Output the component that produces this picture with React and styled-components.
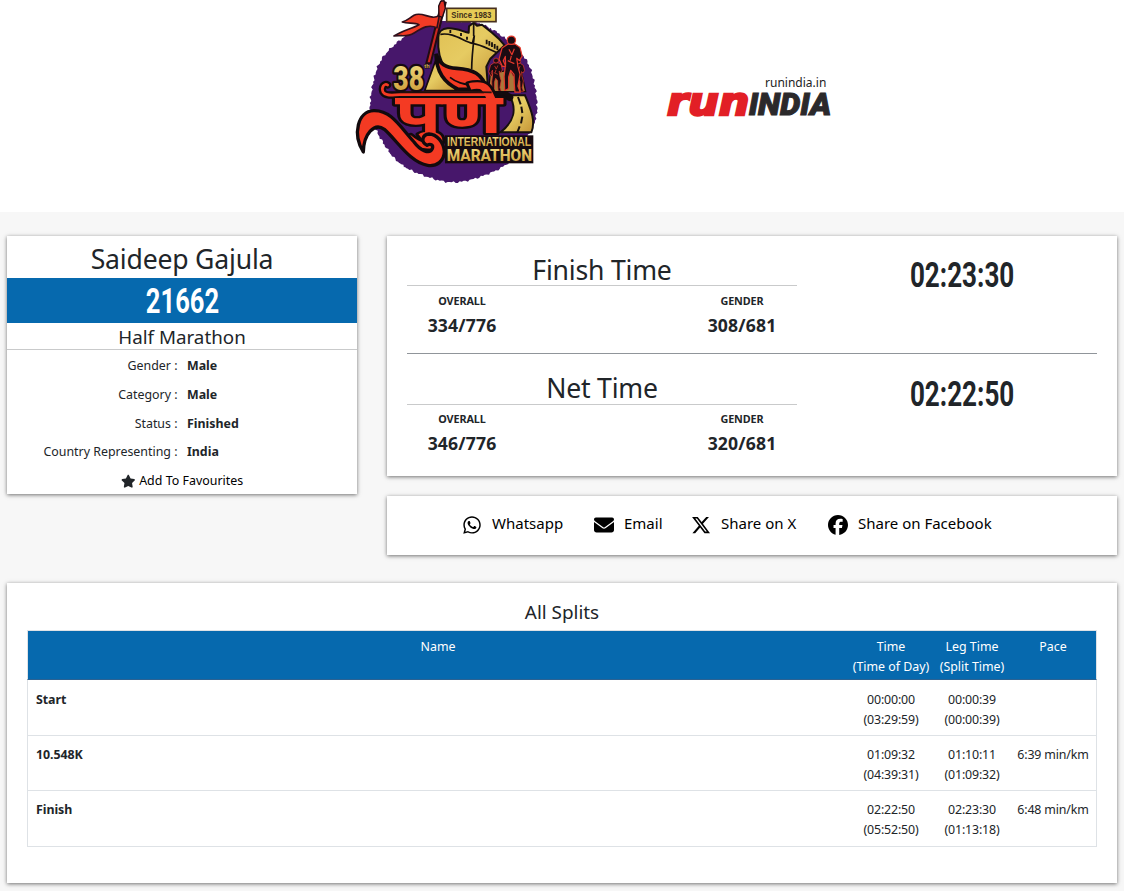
import React from "react";
import styled, { createGlobalStyle } from "styled-components";
import { FaStar, FaWhatsapp, FaEnvelope, FaXTwitter, FaFacebook } from "react-icons/fa6";

const GlobalStyle = createGlobalStyle`
  *, *::before, *::after { box-sizing: border-box; }
  body {
    margin: 0;
    background: #f7f7f7;
    color: #212529;
    font-family: "Noto Sans", "Open Sans", sans-serif;
    font-size: 12.4px;
    line-height: 19.5px;
  }
`;

const Page = styled.div`
  width: 1124px;
  height: 891px;
  overflow: hidden;
`;

const Header = styled.header`
  display: flex;
  height: 212px;
  padding-left: 345px;
  background: #fff;
`;

const EventLogo = styled.svg`
  width: 205px;
  height: 190px;
`;

const BrandLogo = styled.svg`
  width: 190px;
  height: 65px;
  margin: 65px 0 0 105px;
`;

const Main = styled.main`
  display: grid;
  grid-template-columns: 350px 730px;
  column-gap: 30px;
  padding: 24px 7px 0;
  align-items: start;
`;

const Card = styled.section`
  background: #fff;
  box-shadow: 0 1px 4px rgba(0, 0, 0, 0.55);
`;

const ProfileCard = styled(Card)`
  height: 258px;
  text-align: center;
`;

const RunnerName = styled.h1`
  margin: 0;
  height: 42px;
  font-size: 26.6px;
  font-weight: 400;
  line-height: 46px;
  letter-spacing: -0.2px;
`;

const Bib = styled.div`
  height: 45px;
  padding-top: 2px;
  background: #0669ae;
  color: #fff;
  display: flex;
  justify-content: center;
  align-items: center;
`;

const Condensed = styled.span`
  display: inline-block;
  font-family: Roboto, sans-serif;
  font-size: 34.5px;
  font-weight: 700;
  line-height: 45px;
  white-space: nowrap;
  transform: scaleX(${(p) => p.$scale});
`;

const Race = styled.div`
  height: 27px;
  border-bottom: 1px solid #c9cacb;
  font-size: 18.8px;
  line-height: 28px;
`;

const Facts = styled.dl`
  margin: 0;
  padding-top: 2px;
`;

const Fact = styled.div`
  display: grid;
  grid-template-columns: 170.5px 1fr;
  column-gap: 9.5px;
  height: 28.75px;
  line-height: 28.75px;
`;

const FactLabel = styled.dt`
  text-align: right;
`;

const FactValue = styled.dd`
  margin: 0;
  text-align: left;
  font-weight: 700;
`;

const Favourite = styled.div`
  display: flex;
  align-items: center;
  justify-content: center;
  gap: 4px;
  height: 28px;
  color: #000;
  letter-spacing: 0.03px;
  svg { color: #212529; font-size: 14.5px; }
`;

const SideColumn = styled.div`
  display: grid;
  row-gap: 20px;
`;

const TimesCard = styled(Card)`
  height: 240px;
  padding: 0 20px;
`;

const TimeBlock = styled.div`
  display: grid;
  grid-template-columns: 390px 1fr;
  column-gap: 30px;
  height: ${(p) => (p.$ruled ? "118px" : "122px")};
  border-bottom: ${(p) => (p.$ruled ? "1px solid #90959a" : "0")};
`;

const TimeTitle = styled.h2`
  margin: 0;
  height: ${(p) => (p.$ruled ? "50px" : "51px")};
  padding-top: 12px;
  border-bottom: 1px solid #c9cacb;
  text-align: center;
  font-size: 26.6px;
  font-weight: 400;
  line-height: 44px;
  letter-spacing: -0.2px;
`;

const Ranks = styled.div`
  display: flex;
  justify-content: space-between;
  padding-top: ${(p) => (p.$ruled ? "6px" : "5px")};
`;

const Rank = styled.div`
  width: 110px;
  text-align: center;
`;

const RankLabel = styled.div`
  font-size: 10.8px;
  font-weight: 700;
  line-height: 18px;
  letter-spacing: -0.1px;
`;

const RankValue = styled.div`
  font-size: 17.6px;
  font-weight: 700;
  line-height: 30px;
  letter-spacing: 0.15px;
`;

const Clock = styled.div`
  display: flex;
  justify-content: center;
  padding-top: ${(p) => (p.$ruled ? "17px" : "18px")};
`;

const ShareCard = styled(Card)`
  display: flex;
  height: 59px;
  padding: 0 0 3px 75px;
  align-items: center;
  color: #000;
  font-size: 15px;
`;

const ShareLink = styled.a`
  display: flex;
  align-items: center;
  width: ${(p) => p.$width}px;
  white-space: nowrap;
  svg { font-size: 20px; margin: 2px 10px 0 0; flex: none; }
`;

const SplitsCard = styled(Card)`
  grid-column: 1 / -1;
  height: 300px;
  margin-top: 28px;
  padding: 16px 20px 0;
`;

const SplitsTitle = styled.h3`
  margin: 0;
  height: 31px;
  text-align: center;
  font-size: 18.9px;
  font-weight: 400;
  line-height: 26px;
`;

const SplitRow = styled.div`
  display: grid;
  grid-template-columns: 820px 86px 76px 86px;
  width: 1070px;
  height: ${(p) => p.$height}px;
  padding-top: ${(p) => p.$pad}px;
  border: 1px solid #dee2e6;
  border-top: 0;
`;

const SplitHead = styled(SplitRow)`
  background: #0669ae;
  background-clip: padding-box;
  border-top: 1px solid #dee2e6;
  border-bottom-color: #2c6292;
  color: #fff;
  line-height: 20px;
`;

const Cell = styled.div`
  text-align: center;
  white-space: pre-line;
  letter-spacing: ${(p) => (p.$head ? 0 : -0.15)}px;
`;

const NameCell = styled.div`
  padding-left: 8px;
  font-weight: 700;
  letter-spacing: -0.05px;
`;

const facts = [
  ["Gender :", "Male"],
  ["Category :", "Male"],
  ["Status :", "Finished"],
  ["Country Representing :", "India"],
];

const times = [
  { title: "Finish Time", overall: "334/776", gender: "308/681", clock: "02:23:30" },
  { title: "Net Time", overall: "346/776", gender: "320/681", clock: "02:22:50" },
];

const splits = [
  { name: "Start", time: "00:00:00\n(03:29:59)", leg: "00:00:39\n(00:00:39)", pace: "", height: 56, pad: 10 },
  { name: "10.548K", time: "01:09:32\n(04:39:31)", leg: "01:10:11\n(01:09:32)", pace: "6:39 min/km", height: 55, pad: 9 },
  { name: "Finish", time: "02:22:50\n(05:52:50)", leg: "02:23:30\n(01:13:18)", pace: "6:48 min/km", height: 56, pad: 9 },
];

// Brush-edged disc: the radius wobbles on several frequencies around the circle.
const disc = Array.from({ length: 260 }, (_, i) => {
  const a = (i / 260) * Math.PI * 2;
  const r = 1 + 0.008 * Math.sin(a * 9) + 0.009 * Math.sin(i * 2.3) + 0.007 * Math.sin(i * 5.1 + 1);
  return `${(326 + 250 * r * Math.cos(a)).toFixed(1)},${(303 + 242 * r * Math.sin(a)).toFixed(1)}`;
}).join(" ");

const flecks = [[96, 424, 7], [112, 447, 5], [127, 455, 8], [144, 477, 6], [158, 487, 9], [177, 500, 6], [196, 513, 8], [221, 524, 6], [243, 533, 5], [430, 79, 6], [449, 84, 8], [470, 94, 6], [492, 103, 7], [531, 139, 7], [548, 158, 6], [563, 184, 8]];

function Runner({ x, y, s }) {
  return (
    <g transform={`translate(${x} ${y}) scale(${s})`} stroke="#e5382b" strokeWidth="4" fill="#1c0b12" strokeLinejoin="round">
      <path d="M-12 5 L12 4 L29 16 L36 45 L27 60 L18 52 L22 80 L29 106 L22 145 L30 165 L12 165 L10 137 L9 106 L-2 92 L-9 115 L-9 153 L-22 160 L-24 112 L-19 70 L-20 46 L-27 60 L-19 78 L-30 79 L-41 55 L-31 18 Z" />
      <circle cx="0" cy="-8" r="14" />
      <path d="M-8 22 L2 40 L10 20 M-12 60 L10 70 M0 44 L-4 60" fill="none" />
    </g>
  );
}

function MarathonLogo() {
  return (
    <EventLogo viewBox="0 0 615 570" role="img" aria-label="Pune International Marathon">
      <defs>
        <linearGradient id="gold" x1="0" y1="0" x2="1" y2="1">
          <stop offset="0" stopColor="#e0c053" />
          <stop offset="0.45" stopColor="#e6cb62" />
          <stop offset="1" stopColor="#c49436" />
        </linearGradient>
        <linearGradient id="goldText" x1="0" y1="0" x2="0" y2="1">
          <stop offset="0" stopColor="#f5e488" />
          <stop offset="1" stopColor="#c8932f" />
        </linearGradient>
      </defs>
      <polygon points={disc} fill="#47176b" />
      {flecks.map(([x, y, w]) => (
        <path key={x} d={`M${x} ${y} l${w} ${w / 2} l-2 4 l-${w / 2} -1 Z`} fill="#fff" />
      ))}
      <path d="M291 4 L302 8 L257 190 L244 190 Z" fill="#c9281f" stroke="#210b13" strokeWidth="6" />
      <path d="M283 46 C258 64 232 32 207 46 C193 54 187 62 172 66 C188 72 208 67 222 74 C199 87 174 91 147 108 C169 104 185 113 207 99 C233 83 250 72 276 83 Z" fill="#f23b25" stroke="#31101c" strokeWidth="5" strokeLinejoin="round" />
      <path d="M281 18 L287 4 L297 2 L301 25 L292 52 L282 48 Z" fill="#df3023" stroke="#210b13" strokeWidth="4" />
      <path d="M270 187 L239 272 H334 Z" fill="url(#gold)" stroke="#160a0d" strokeWidth="5" />
      <path d="M527 205 L542 275 H430 L436 220 Z" fill="#a8783a" stroke="#160a0d" strokeWidth="4" />
      <path d="M280 112 C280 96 292 86 308 85 C335 83 358 97 371 98 L372 79 L386 68 L396 77 L411 74 L441 98 L463 118 L479 136 L455 158 L436 176 L424 200 L428 250 L351 228 L302 204 C282 180 278 146 280 112 Z" fill="url(#gold)" stroke="#17100e" strokeWidth="6" strokeLinejoin="round" />
      <path d="M286 103 C325 96 355 124 382 130 C410 134 430 148 456 158 M388 106 C384 140 380 174 380 208 M386 70 V108 M388 106 L382 130" stroke="#17100e" strokeWidth="5" fill="none" />
      <path d="M425 119 v14 M433 123 v14 M441 127 v14 M449 132 v14 M457 137 v13 M316 90 v9 M348 99 v9 M366 110 v9" stroke="#17100e" strokeWidth="5.5" />
      <path d="M273 162 C284 192 302 203 335 205 C384 208 412 220 426 268 H340 C300 250 274 217 273 162 Z" fill="#f43a23" stroke="#120a0d" strokeWidth="11" />
      <path d="M315 232 C345 256 372 252 410 262" stroke="#120a0d" strokeWidth="5" fill="none" />
      <Runner x={453} y={186} s={0.53} />
      <Runner x={520} y={188} s={0.52} />
      <Runner x={499} y={128} s={0.9} />
      <path d="M493 286 H540 C558 330 573 363 559 397 H466 C507 366 517 327 493 286 Z" fill="url(#gold)" stroke="#17100e" strokeWidth="6" />
      <path d="M519 291 l8 22 M529 320 l3 19 M532 350 l-4 20 M524 379 l-7 18" stroke="#17100e" strokeWidth="6" />
      <path d="M128 255 C118 248 108 262 114 276 C122 290 145 284 165 284 H480 L494 292" fill="none" stroke="#120a0d" strokeWidth="22" strokeLinecap="round" />
      <g fontFamily='"Noto Sans Devanagari", "Noto Sans", sans-serif' fontWeight="700" fontSize="170" fill="#f43a23" stroke="#120a0d" strokeWidth="14" paintOrder="stroke" strokeLinejoin="round">
        <text x="150" y="398" textLength="322" lengthAdjust="spacingAndGlyphs">पुणे</text>
      </g>
      <path d="M128 255 C118 248 108 262 114 276 C122 290 145 284 165 284 H440" fill="none" stroke="#f43a23" strokeWidth="8" strokeLinecap="round" />
      <path d="M165 276 L300 274 L440 277" stroke="#2a1210" strokeWidth="5" fill="none" />
      <path d="M55 456 C22 402 38 334 86 332 C138 330 165 380 207 426 C226 452 254 464 262 446 C266 434 256 430 246 436 C226 426 232 404 252 402 C276 402 296 428 298 454 C298 484 274 500 248 496 C196 488 158 424 118 388 C88 366 56 402 55 456 Z" fill="#f43a23" stroke="#120a0d" strokeWidth="10" strokeLinejoin="round" />
      <rect x="305" y="25" width="148" height="40" fill="#e7cc56" stroke="#47301f" strokeWidth="5" />
      <g fontFamily='"Liberation Sans", sans-serif' fontWeight="700">
        <text x="319" y="54" fontSize="26" fill="#42301a" textLength="120" lengthAdjust="spacingAndGlyphs">Since 1983</text>
        <rect x="300" y="406" width="265" height="84" fill="#160a10" />
        <g stroke="#160a10" strokeLinejoin="round" paintOrder="stroke" fill="url(#goldText)">
          <text x="145" y="270" fontFamily="Roboto, sans-serif" fontWeight="900" fontSize="102" strokeWidth="14" textLength="92" lengthAdjust="spacingAndGlyphs">38</text>
          <text x="238" y="204" fontSize="18" strokeWidth="3" textLength="16" lengthAdjust="spacingAndGlyphs">th</text>
          <text x="306" y="438" fontSize="38" strokeWidth="0" textLength="252" lengthAdjust="spacingAndGlyphs">INTERNATIONAL</text>
          <text x="305" y="484" fontFamily="Roboto, sans-serif" fontWeight="800" fontSize="51" strokeWidth="0" textLength="256" lengthAdjust="spacingAndGlyphs">MARATHON</text>
        </g>
      </g>
    </EventLogo>
  );
}

function RunIndiaLogo() {
  return (
    <BrandLogo viewBox="0 0 570 195" role="img" aria-label="runindia.in">
      <text x="330" y="65" fontFamily='"Noto Sans", sans-serif' fontSize="36" fill="#222" textLength="184" lengthAdjust="spacingAndGlyphs">runindia.in</text>
      <g fontStyle="italic">
        <text x="36" y="149" fontFamily='"DejaVu Sans", sans-serif' fontWeight="700" fontSize="112" fill="#e21f26" stroke="#e21f26" strokeWidth="7" textLength="247" lengthAdjust="spacingAndGlyphs">run</text>
        <text x="281" y="151" fontFamily="Roboto, sans-serif" fontWeight="900" fontSize="94" fill="#2b292b" stroke="#2b292b" strokeWidth="3" textLength="248" lengthAdjust="spacingAndGlyphs">INDIA</text>
      </g>
    </BrandLogo>
  );
}

export default function App() {
  return (
    <Page>
      <GlobalStyle />
      <Header>
        <MarathonLogo />
        <RunIndiaLogo />
      </Header>
      <Main>
        <ProfileCard>
          <RunnerName>Saideep Gajula</RunnerName>
          <Bib><Condensed $scale={0.74}>21662</Condensed></Bib>
          <Race>Half Marathon</Race>
          <Facts>
            {facts.map(([label, value]) => (
              <Fact key={label}>
                <FactLabel>{label}</FactLabel>
                <FactValue>{value}</FactValue>
              </Fact>
            ))}
          </Facts>
          <Favourite><FaStar /> Add To Favourites</Favourite>
        </ProfileCard>
        <SideColumn>
          <TimesCard>
            {times.map((t, i) => (
              <TimeBlock key={t.title} $ruled={i === 0}>
                <div>
                  <TimeTitle $ruled={i === 0}>{t.title}</TimeTitle>
                  <Ranks $ruled={i === 0}>
                    <Rank><RankLabel>OVERALL</RankLabel><RankValue>{t.overall}</RankValue></Rank>
                    <Rank><RankLabel>GENDER</RankLabel><RankValue>{t.gender}</RankValue></Rank>
                  </Ranks>
                </div>
                <Clock $ruled={i === 0}><Condensed $scale={0.755}>{t.clock}</Condensed></Clock>
              </TimeBlock>
            ))}
          </TimesCard>
          <ShareCard>
            <ShareLink $width={132}><FaWhatsapp />Whatsapp</ShareLink>
            <ShareLink $width={97}><FaEnvelope />Email</ShareLink>
            <ShareLink $width={137}><FaXTwitter />Share on X</ShareLink>
            <ShareLink $width={180}><FaFacebook />Share on Facebook</ShareLink>
          </ShareCard>
        </SideColumn>
        <SplitsCard>
          <SplitsTitle>All Splits</SplitsTitle>
          <SplitHead $height={50} $pad={6}>
            <Cell $head>Name</Cell>
            <Cell $head>{"Time\n(Time of Day)"}</Cell>
            <Cell $head>{"Leg Time\n(Split Time)"}</Cell>
            <Cell $head>Pace</Cell>
          </SplitHead>
          {splits.map((s) => (
            <SplitRow key={s.name} $height={s.height} $pad={s.pad}>
              <NameCell>{s.name}</NameCell>
              <Cell>{s.time}</Cell>
              <Cell>{s.leg}</Cell>
              <Cell>{s.pace}</Cell>
            </SplitRow>
          ))}
        </SplitsCard>
      </Main>
    </Page>
  );
}
